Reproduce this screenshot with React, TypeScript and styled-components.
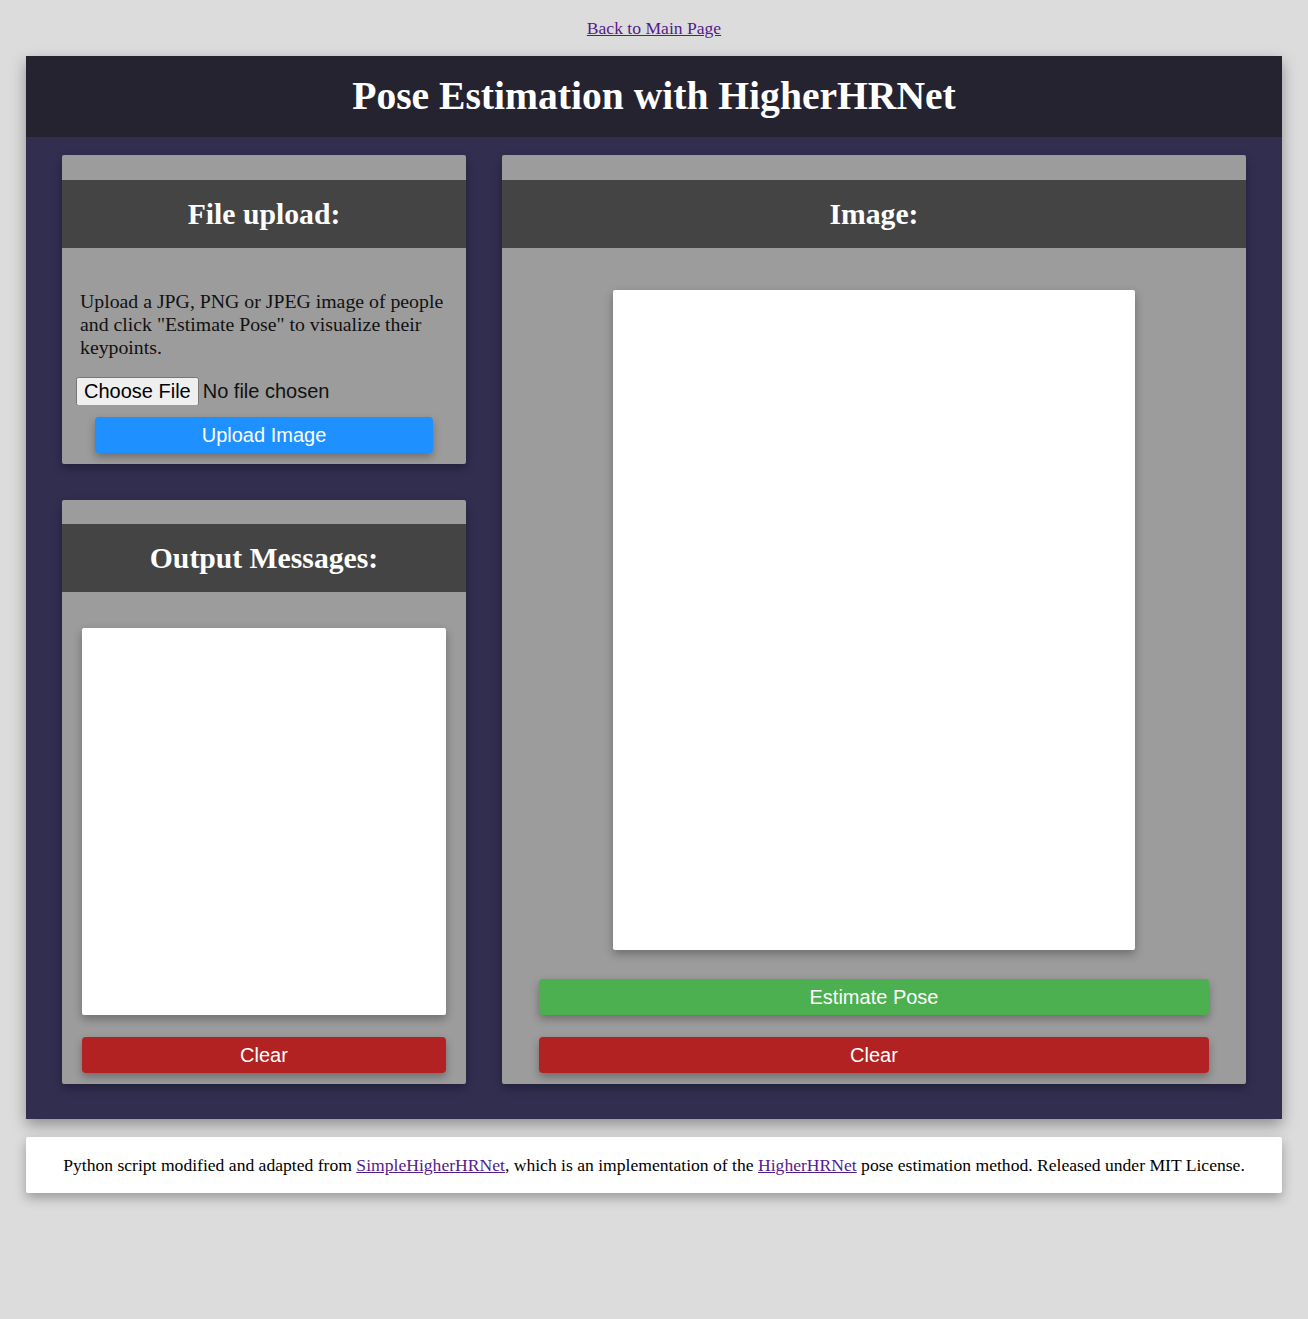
import React from "react";
import styled, { createGlobalStyle } from "styled-components";

const Global = createGlobalStyle`
  html, body { margin: 0; padding: 0; }
  body {
    background: #dcdcdc;
    font-family: "Liberation Serif", "Times New Roman", serif;
    font-size: 17.6px;
    color: #000;
  }
`;

const Page = styled.div`
  padding: 0 26px 126px;
`;

const TopBar = styled.div`
  height: 56px;
  display: flex;
  justify-content: center;
  align-items: flex-start;
  box-sizing: border-box;
`;

const TopLink = styled.a`
  margin-top: 17px;
  font-size: 17.6px;
  line-height: 22px;
  color: #551a8b;
  text-decoration: underline;
`;

const Main = styled.div`
  background: #312e50;
  box-shadow: 0 6px 14px rgba(0, 0, 0, 0.35);
`;

const MainHeader = styled.h1`
  margin: 0;
  background: #25232f;
  color: #fff;
  text-align: center;
  font-size: 39.6px;
  font-weight: bold;
  height: 81px;
  line-height: 81px;
`;

const Columns = styled.div`
  display: flex;
  gap: 36px;
  padding: 18px 36px 35px;
  align-items: stretch;
`;

const LeftCol = styled.div`
  width: 404px;
  display: flex;
  flex-direction: column;
  gap: 36px;
`;

const Card = styled.div<{ $grow?: boolean; $top?: number }>`
  background: #9c9c9c;
  border-radius: 2px;
  padding-top: ${(p) => p.$top ?? 25}px;
  padding-bottom: 11px;
  box-shadow: 0 4px 10px rgba(0, 0, 0, 0.3);
  display: flex;
  flex-direction: column;
  ${(p) => (p.$grow ? "flex: 1;" : "")}
`;

const RightCard = styled(Card)`
  width: 744px;
`;

const CardHeader = styled.h2`
  margin: 0;
  background: #444444;
  color: #fff;
  text-align: center;
  font-size: 29.7px;
  font-weight: bold;
  height: 68px;
  line-height: 68px;
`;

const Description = styled.p`
  margin: 42px 18px 0;
  font-size: 19.8px;
  line-height: 23px;
  color: #111;
`;

const FileInput = styled.input`
  margin: 18px 0 0 14px;
  font-family: "Liberation Sans", Arial, sans-serif;
  font-size: 20px;
  height: 28px;
  color: #111;
`;

const Button = styled.button<{ $color: string; $mx: number; $mt: number }>`
  display: block;
  margin: ${(p) => p.$mt}px ${(p) => p.$mx}px 0;
  height: 36px;
  border: none;
  border-radius: 4px;
  background: ${(p) => p.$color};
  color: #fff;
  font-family: "Liberation Sans", Arial, sans-serif;
  font-size: 20px;
  box-shadow: 0 4px 8px rgba(0, 0, 0, 0.3);
  cursor: pointer;
`;

const WhiteBox = styled.div<{ $w: number; $h: number; $mt: number }>`
  background: #fff;
  width: ${(p) => p.$w}px;
  height: ${(p) => p.$h}px;
  margin: ${(p) => p.$mt}px auto 0;
  border-radius: 2px;
  box-shadow: 0 4px 10px rgba(0, 0, 0, 0.3);
`;

const Footer = styled.div`
  margin-top: 18px;
  background: #fff;
  height: 56px;
  display: flex;
  align-items: center;
  justify-content: center;
  font-size: 17.6px;
  border-radius: 2px;
  box-shadow: 0 5px 12px rgba(0, 0, 0, 0.3);
`;

const FootLink = styled.a`
  color: #551a8b;
  text-decoration: underline;
`;

export default function App() {
  return (
    <>
      <Global />
      <Page>
        <TopBar>
          <TopLink href="#">Back to Main Page</TopLink>
        </TopBar>
        <Main>
          <MainHeader>Pose Estimation with HigherHRNet</MainHeader>
          <Columns>
            <LeftCol>
              <Card>
                <CardHeader>File upload:</CardHeader>
                <Description>
                  Upload a JPG, PNG or JPEG image of people and click "Estimate Pose" to
                  visualize their keypoints.
                </Description>
                <div>
                  <FileInput type="file" />
                </div>
                <Button $color="#1e90ff" $mx={33} $mt={12}>
                  Upload Image
                </Button>
              </Card>
              <Card $grow $top={24}>
                <CardHeader>Output Messages:</CardHeader>
                <WhiteBox $w={364} $h={387} $mt={36} />
                <Button $color="#b22222" $mx={20} $mt={22}>
                  Clear
                </Button>
              </Card>
            </LeftCol>
            <RightCard>
              <CardHeader>Image:</CardHeader>
              <WhiteBox $w={522} $h={660} $mt={42} />
              <Button $color="#4caf50" $mx={37} $mt={29}>
                Estimate Pose
              </Button>
              <Button $color="#b22222" $mx={37} $mt={22}>
                Clear
              </Button>
            </RightCard>
          </Columns>
        </Main>
        <Footer>
          <span>
            Python script modified and adapted from{" "}
            <FootLink href="#">SimpleHigherHRNet</FootLink>, which is an implementation of the{" "}
            <FootLink href="#">HigherHRNet</FootLink> pose estimation method. Released under MIT
            License.
          </span>
        </Footer>
      </Page>
    </>
  );
}
